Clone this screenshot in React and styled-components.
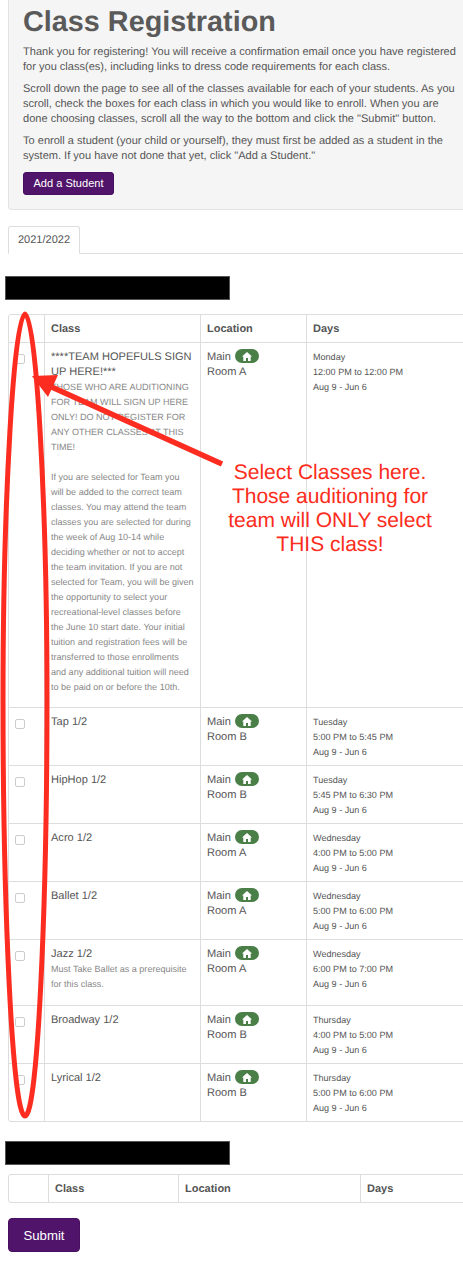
import React from "react";
import styled, { createGlobalStyle } from "styled-components";

const classes = [
  { name: "Tap 1/2", room: "Room B", day: "Tuesday", time: "5:00 PM to 5:45 PM" },
  { name: "HipHop 1/2", room: "Room B", day: "Tuesday", time: "5:45 PM to 6:30 PM" },
  { name: "Acro 1/2", room: "Room A", day: "Wednesday", time: "4:00 PM to 5:00 PM" },
  { name: "Ballet 1/2", room: "Room A", day: "Wednesday", time: "5:00 PM to 6:00 PM" },
  {
    name: "Jazz 1/2",
    room: "Room A",
    day: "Wednesday",
    time: "6:00 PM to 7:00 PM",
    note: "Must Take Ballet as a prerequisite for this class.",
  },
  { name: "Broadway 1/2", room: "Room B", day: "Thursday", time: "4:00 PM to 5:00 PM" },
  { name: "Lyrical 1/2", room: "Room B", day: "Thursday", time: "5:00 PM to 6:00 PM" },
];

function HomeBadge() {
  return (
    <Badge>
      <svg width="10" height="9" viewBox="0 0 10 9" fill="#fff">
        <path d="M5 0 L10 4.6 L8.7 4.6 L8.7 9 L6 9 L6 6 L4 6 L4 9 L1.3 9 L1.3 4.6 L0 4.6 Z" />
      </svg>
    </Badge>
  );
}

function ClassRow({ name, room, day, time, children }) {
  return (
    <tr>
      <Td>
        <Check type="checkbox" />
      </Td>
      <Td>
        {name}
        {children && <Note>{children}</Note>}
      </Td>
      <Td>
        Main <HomeBadge />
        <br />
        {room}
      </Td>
      <Td>
        <Schedule>
          {day}
          <br />
          {time}
          <br />
          Aug 9 - Jun 6
        </Schedule>
      </Td>
    </tr>
  );
}

export default function App() {
  return (
    <Page>
      <GlobalStyle />
      <Well>
        <Title>Class Registration</Title>
        <Para>
          Thank you for registering! You will receive a confirmation email once you have
          registered for you class(es), including links to dress code requirements for each
          class.
        </Para>
        <Para>
          Scroll down the page to see all of the classes available for each of your students.
          As you scroll, check the boxes for each class in which you would like to enroll. When
          you are done choosing classes, scroll all the way to the bottom and click the
          "Submit" button.
        </Para>
        <Para>
          To enroll a student (your child or yourself), they must first be added as a student in
          the system. If you have not done that yet, click "Add a Student."
        </Para>
        <SmallButton>Add a Student</SmallButton>
      </Well>

      <Tabs>
        <Tab>2021/2022</Tab>
      </Tabs>

      <Redacted />
      <Table>
        <colgroup>
          <col style={{ width: 35 }} />
          <col style={{ width: 156 }} />
          <col style={{ width: 106 }} />
          <col />
        </colgroup>
        <thead>
          <tr>
            <Th />
            <Th>Class</Th>
            <Th>Location</Th>
            <Th>Days</Th>
          </tr>
        </thead>
        <tbody>
          <tr>
            <Td>
              <Check type="checkbox" />
            </Td>
            <Td>
              ****TEAM HOPEFULS SIGN UP HERE!***
              <Note $tight>
                THOSE WHO ARE AUDITIONING FOR TEAM WILL SIGN UP HERE ONLY! DO NOT REGISTER FOR
                ANY OTHER CLASSES AT THIS TIME!
                <br />
                <br />
                If you are selected for Team you will be added to the correct team classes. You
                may attend the team classes you are selected for during the week of Aug 10-14
                while deciding whether or not to accept the team invitation. If you are not
                selected for Team, you will be given the opportunity to select your
                recreational-level classes before the June 10 start date. Your initial tuition
                and registration fees will be transferred to those enrollments and any
                additional tuition will need to be paid on or before the 10th.
              </Note>
            </Td>
            <Td>
              Main <HomeBadge />
              <br />
              Room A
            </Td>
            <Td>
              <Schedule>
                Monday
                <br />
                12:00 PM to 12:00 PM
                <br />
                Aug 9 - Jun 6
              </Schedule>
            </Td>
          </tr>
          {classes.map((c) => (
            <ClassRow key={c.name} {...c}>
              {c.note}
            </ClassRow>
          ))}
        </tbody>
      </Table>

      <Redacted $next />
      <Table $next>
        <colgroup>
          <col style={{ width: 39 }} />
          <col style={{ width: 130 }} />
          <col style={{ width: 182 }} />
          <col />
        </colgroup>
        <thead>
          <tr>
            <Th />
            <Th>Class</Th>
            <Th>Location</Th>
            <Th>Days</Th>
          </tr>
        </thead>
      </Table>

      <SubmitButton>Submit</SubmitButton>

      <Callout>
        Select Classes here.
        <br />
        Those auditioning for
        <br />
        team will ONLY select
        <br />
        THIS class!
      </Callout>

      <Markup width="463" height="1274" viewBox="0 0 463 1274">
        <path
          d="M25 314 C14 314 3 500 3 700 C3 900 12 1116 25 1116 C38 1116 47 900 47 700 C47 500 36 314 25 314 Z"
          fill="none"
          stroke="#fc2c20"
          strokeWidth="5"
        />
        <line x1="222" y1="464" x2="45" y2="384" stroke="#fc2c20" strokeWidth="5.5" />
        <polygon points="32,376 58,375 48,397" fill="#fc2c20" />
      </Markup>
    </Page>
  );
}

const GlobalStyle = createGlobalStyle`
  html, body {
    margin: 0;
    padding: 0;
    background: #fff;
  }
`;

const Page = styled.div`
  position: relative;
  width: 463px;
  height: 1274px;
  overflow: hidden;
  padding-left: 8px;
  box-sizing: border-box;
  font-family: "Liberation Sans", Arial, sans-serif;
  font-size: 11.05px;
  line-height: 15px;
  color: #555;
  text-rendering: geometricPrecision;
`;

const Well = styled.div`
  width: 620px;
  height: 210px;
  box-sizing: border-box;
  padding: 4px 14px 0 14px;
  background: #f5f5f5;
  border: 1px solid #e3e3e3;
  border-top: none;
  border-radius: 0 0 4px 4px;
`;

const Title = styled.h1`
  margin: 0 0 5px;
  font-size: 28.8px;
  line-height: 36px;
  font-weight: bold;
  color: #5a5a5a;
`;

const Para = styled.p`
  margin: 0 0 7px;
  width: 437px;
`;

const SmallButton = styled.button`
  display: block;
  width: 91px;
  height: 23px;
  padding: 0;
  margin-top: 8px;
  background: #50146a;
  border: 1px solid #47105e;
  border-radius: 3px;
  color: #fff;
  font: inherit;
`;

const Tabs = styled.div`
  display: flex;
  width: 620px;
  margin-top: 16px;
  border-bottom: 1px solid #ddd;
`;

const Tab = styled.div`
  width: 72px;
  height: 28px;
  margin-bottom: -1px;
  box-sizing: border-box;
  background: #fff;
  border: 1px solid #ddd;
  border-bottom-color: #fff;
  border-radius: 3px 3px 0 0;
  font-size: 11px;
  line-height: 27px;
  text-align: center;
`;

const Redacted = styled.div`
  width: 225px;
  height: 24px;
  box-sizing: border-box;
  margin: ${(p) => (p.$next ? "19px" : "22px")} 0 0 -3px;
  background: #000;
  border: 1px solid #555;
`;

const Table = styled.table`
  width: 620px;
  margin-top: ${(p) => (p.$next ? "9px" : "14px")};
  table-layout: fixed;
  border-collapse: separate;
  border-spacing: 0;
  border: 1px solid #ddd;
  border-radius: 3px;
`;

const Th = styled.th`
  height: 27px;
  padding: 2px 6px 0;
  box-sizing: border-box;
  text-align: left;
  font-size: 11px;
  font-weight: bold;
  border-left: 1px solid #ddd;
  &:first-child {
    border-left: none;
  }
`;

const Td = styled.td`
  padding: 7px 6px 5px;
  vertical-align: top;
  font-size: 11.05px;
  border-top: 1px solid #ddd;
  border-left: 1px solid #ddd;
  &:first-child {
    border-left: none;
  }
`;

const Check = styled.input`
  appearance: none;
  display: block;
  width: 10px;
  height: 10px;
  margin: 4px 0 0;
  background: #fff;
  border: 1px solid #ccc;
  border-radius: 2px;
  box-sizing: border-box;
`;

const Note = styled.div`
  margin-bottom: ${(p) => (p.$tight ? "7px" : "8px")};
  font-size: 9.05px;
  color: #888;
`;

const Schedule = styled.div`
  font-size: 9.05px;
`;

const Badge = styled.span`
  display: inline-flex;
  align-items: center;
  justify-content: center;
  vertical-align: top;
  width: 24px;
  height: 14px;
  margin: -1px 0 0 1px;
  border-radius: 7px;
  background: #4a8048;
`;

const SubmitButton = styled.button`
  display: block;
  width: 72px;
  height: 34px;
  margin-top: 15px;
  padding: 0;
  background: #50146a;
  border: 1px solid #47105e;
  border-radius: 4px;
  color: #fff;
  font: inherit;
  font-size: 13.2px;
`;

const Callout = styled.div`
  position: absolute;
  left: 200px;
  top: 461px;
  width: 260px;
  text-align: center;
  font-size: 21px;
  line-height: 24px;
  color: #fc2c20;
`;

const Markup = styled.svg`
  position: absolute;
  left: 0;
  top: 0;
  pointer-events: none;
`;
